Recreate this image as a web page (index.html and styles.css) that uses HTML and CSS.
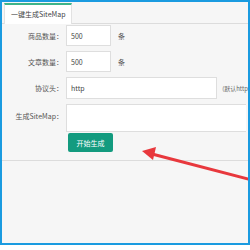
FILE: index.html
```html
<!DOCTYPE html>
<html lang="zh-CN">
<head>
    <meta charset="UTF-8">
    <title>一键生成SiteMap</title>
    <link rel="stylesheet" href="styles.css">
</head>
<body>
    <div class="frame">
        <div class="tabs">
            <div class="tab">一键生成SiteMap</div>
        </div>
        <div class="form">
            <div class="row">
                <label>商品数量：</label>
                <input class="short" type="text" value="500">
                <span class="unit">条</span>
            </div>
            <div class="row">
                <label>文章数量：</label>
                <input class="short" type="text" value="500">
                <span class="unit">条</span>
            </div>
            <div class="row">
                <label>协议头：</label>
                <input class="long" type="text" value="http">
                <span class="tip">(默认http</span>
            </div>
            <div class="row top">
                <label>生成SiteMap：</label>
                <textarea class="area"></textarea>
            </div>
            <div class="row last">
                <label></label>
                <button class="btn">开始生成</button>
            </div>
        </div>
        <div class="sep"></div>
        <svg class="arrow" width="250" height="250" viewBox="0 0 250 250">
            <line x1="252" y1="180" x2="152" y2="154" stroke="#e8383d" stroke-width="3" stroke-linecap="round"/>
            <polygon points="142,151 156,147 153,160" fill="#e8383d"/>
        </svg>
    </div>
</body>
</html>
```

FILE: styles.css
```css
body {
    margin: 0;
    background: #fff;
    font-family: "Noto Sans CJK SC", "Liberation Sans", sans-serif;
    font-size: 7px;
    color: #333;
}
.frame {
    position: relative;
    width: 246px;
    height: 241px;
    border: 2px solid #1a9be0;
    background: #f6f6f6;
    overflow: hidden;
}
.tabs {
    height: 21px;
    border-bottom: 1px solid #dcdcdc;
    display: flex;
    align-items: flex-end;
    padding-left: 2px;
}
.tab {
    height: 19px;
    line-height: 19px;
    padding: 0 6px;
    background: #fff;
    border: 1px solid #e2e2e2;
    border-top: 2px solid #3db389;
    border-bottom: none;
    margin-bottom: -1px;
    color: #444;
}
.form {
    padding-top: 1px;
}
.row {
    display: flex;
    align-items: center;
    margin-bottom: 5px;
}
.row.top {
    align-items: flex-start;
    margin-bottom: 1px;
}
.row.top label {
    padding-top: 7px;
}
.row.last {
    margin-bottom: 0;
}
label {
    width: 61px;
    text-align: right;
    flex: none;
    color: #555;
}
input, textarea {
    font-family: inherit;
    font-size: 7px;
    color: #444;
    background: #fff;
    border: 1px solid #dedede;
    box-sizing: border-box;
    margin: 0 0 0 3px;
    padding: 0 4px;
}
.short {
    width: 45px;
    height: 21px;
}
.long {
    width: 156px;
    height: 22px;
}
.area {
    width: 180px;
    height: 28px;
    resize: none;
    border-right: none;
}
.unit {
    margin-left: 7px;
    color: #555;
}
.tip {
    margin-left: 5px;
    font-size: 6px;
    color: #666;
    white-space: nowrap;
}
.btn {
    margin-left: 5px;
    width: 45px;
    height: 19px;
    border: none;
    border-radius: 2px;
    background: #139b7f;
    color: #fff;
    font-family: inherit;
    font-size: 7px;
}
.sep {
    border-top: 1px solid #dcdcdc;
    margin-top: 8px;
}
.arrow {
    position: absolute;
    left: -2px;
    top: -2px;
}
```
